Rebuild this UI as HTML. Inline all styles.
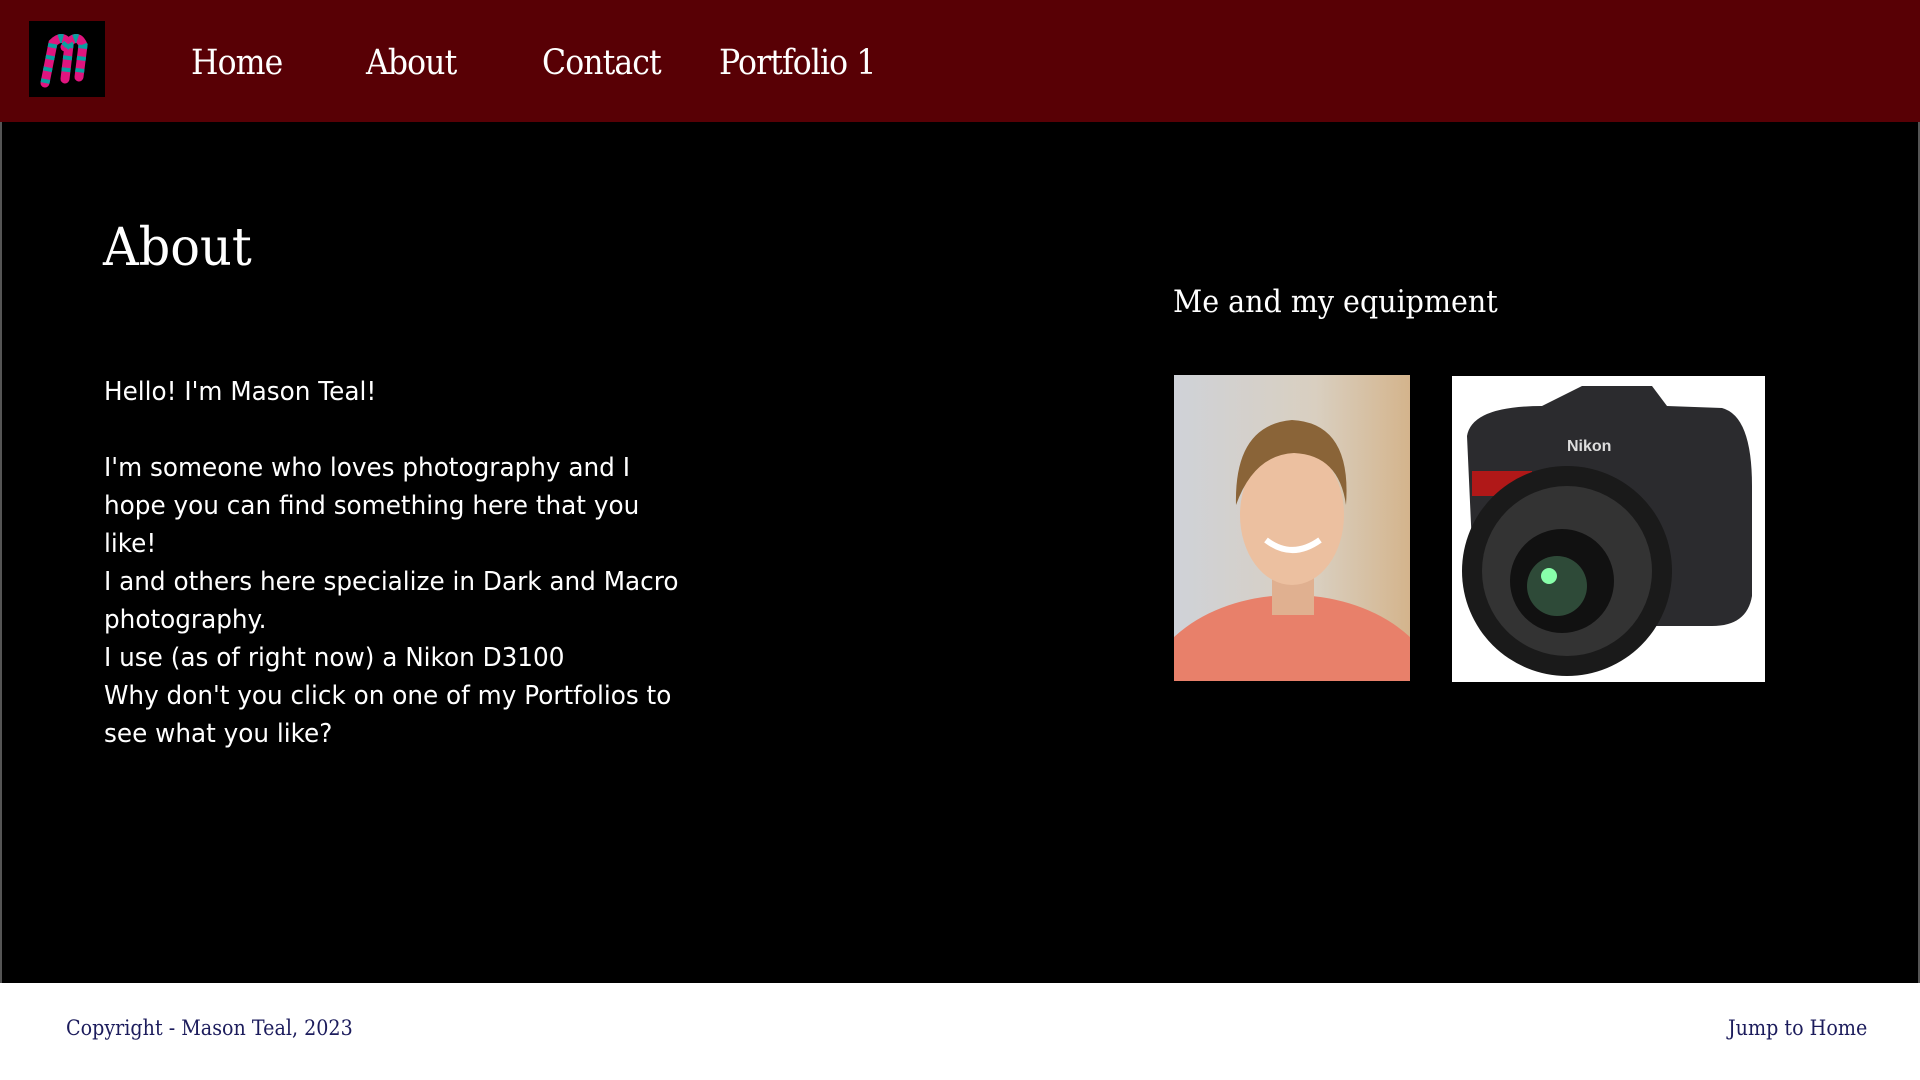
<!DOCTYPE html>
<html><head><meta charset="utf-8"><style>
*{margin:0;padding:0;box-sizing:border-box}
body{width:1920px;height:1080px;background:#fff;overflow:hidden;font-family:"Liberation Serif",serif;position:relative}
header{position:absolute;left:0;top:0;width:1920px;height:122px;background:#580005}
.logo{position:absolute;left:29px;top:21px;width:76px;height:76px;background:#000}
nav a{position:absolute;top:43px;color:#fff;font-size:35px;text-decoration:none;font-family:"DejaVu Serif","Liberation Serif",serif;letter-spacing:-1px;transform:scaleX(.9);transform-origin:left}
main{position:absolute;left:0;top:122px;width:1920px;height:861px;background:#000;border-left:2px solid #555;border-right:2px solid #555}
h1{position:absolute;left:101px;top:96px;color:#fff;font-size:52px;font-weight:normal;font-family:"DejaVu Serif",serif;transform:scaleX(.95);transform-origin:left}
h2{position:absolute;left:1171px;top:162px;color:#fff;font-size:31px;font-weight:normal;font-family:"DejaVu Serif",serif;transform:scaleX(.92);transform-origin:left;white-space:nowrap}
.txt{position:absolute;left:102px;top:251px;color:#fff;font-family:"DejaVu Sans","Liberation Sans",sans-serif;font-size:26px;line-height:38px;transform:scaleX(.95);transform-origin:left;white-space:nowrap}
.photo{position:absolute;left:1172px;top:253px;width:236px;height:306px;background:linear-gradient(90deg,#cfd2d8,#d9cfc0 60%,#d4b48c);overflow:hidden}
.cam{position:absolute;left:1450px;top:254px;width:313px;height:306px;background:#fff;overflow:hidden}
footer p{position:absolute;top:1016px;font-size:21px;color:#1c1c5c;font-family:"DejaVu Serif",serif;transform:scaleX(.91);transform-origin:left;white-space:nowrap}
</style></head><body>
<header>
<div class="logo"><svg width="76" height="76" viewBox="0 0 76 76"><path d="M16 62 L24 22 Q34 12 40 24 L36 58 M36 26 Q48 10 54 24 L50 56" fill="none" stroke="#e0157f" stroke-width="9" stroke-linecap="round"/><path d="M16 62 L24 22 Q34 12 40 24 L36 58 M36 26 Q48 10 54 24 L50 56" fill="none" stroke="#0aa0a0" stroke-width="9" stroke-dasharray="4 8" stroke-linecap="butt"/></svg></div>
<nav><a style="left:191px">Home</a><a style="left:366px">About</a><a style="left:542px">Contact</a><a style="left:719px">Portfolio 1</a></nav>
</header>
<main>
<h1>About</h1>
<h2>Me and my equipment</h2>
<div class="txt">Hello! I'm Mason Teal!<br><br>I'm someone who loves photography and I<br>hope you can find something here that you<br>like!<br>I and others here specialize in Dark and Macro<br>photography.<br>I use (as of right now) a Nikon D3100<br>Why don't you click on one of my Portfolios to<br>see what you like?</div>
<div class="photo"><svg width="236" height="306"><ellipse cx="118" cy="330" rx="150" ry="110" fill="#e8806a"/><rect x="98" y="180" width="42" height="60" fill="#e0b090"/><ellipse cx="118" cy="140" rx="52" ry="70" fill="#ecc0a0"/><path d="M62 130 Q60 50 118 45 Q178 48 172 130 Q165 80 120 78 Q80 80 62 130Z" fill="#8a6438"/><path d="M92 165 Q118 185 146 165" stroke="#fff" stroke-width="6" fill="none"/></svg></div>
<div class="cam"><svg width="313" height="306"><path d="M15 60 Q20 30 90 30 L130 10 L200 10 L215 30 L270 32 Q300 40 300 110 L300 220 Q295 250 260 250 L200 250 L200 160 L20 170Z" fill="#2b2b2e"/><rect x="20" y="95" width="60" height="25" fill="#b01818"/><circle cx="115" cy="195" r="105" fill="#1a1a1a"/><circle cx="115" cy="195" r="85" fill="#333"/><circle cx="110" cy="205" r="52" fill="#111"/><circle cx="105" cy="210" r="30" fill="#2e4a38"/><circle cx="97" cy="200" r="8" fill="#8fa"/><text x="115" y="75" fill="#ddd" font-family="Liberation Sans" font-weight="bold" font-size="16">Nikon</text></svg></div>
</main>
<footer><p style="left:66px">Copyright - Mason Teal, 2023</p><p style="left:1728px">Jump to Home</p></footer>
</body></html>
